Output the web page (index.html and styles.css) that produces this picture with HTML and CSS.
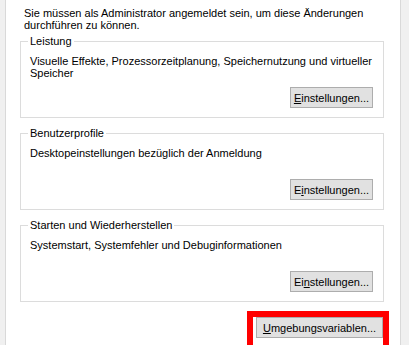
FILE: index.html
```html
<!DOCTYPE html>
<html lang="de">
<head>
    <meta charset="UTF-8">
    <meta name="viewport" content="width=device-width, initial-scale=1.0">
    <title>Systemeigenschaften - Erweitert</title>
    <link rel="stylesheet" href="styles.css">
</head>
<body>
    <div class="page">
        <p class="intro">
            Sie müssen als Administrator angemeldet sein, um diese Änderungen<br>
            durchführen zu können.
        </p>

        <fieldset class="group">
            <legend>Leistung</legend>
            <p class="desc">Visuelle Effekte, Prozessorzeitplanung, Speichernutzung und virtueller Speicher</p>
            <div class="actions">
                <button type="button"><u>E</u>instellungen...</button>
            </div>
        </fieldset>

        <fieldset class="group">
            <legend>Benutzerprofile</legend>
            <p class="desc">Desktopeinstellungen bezüglich der Anmeldung</p>
            <div class="actions">
                <button type="button">E<u>i</u>nstellungen...</button>
            </div>
        </fieldset>

        <fieldset class="group">
            <legend>Starten und Wiederherstellen</legend>
            <p class="desc">Systemstart, Systemfehler und Debuginformationen</p>
            <div class="actions">
                <button type="button">Ei<u>n</u>stellungen...</button>
            </div>
        </fieldset>

        <div class="footer">
            <span class="highlight">
                <button type="button" class="wide"><u>U</u>mgebungsvariablen...</button>
            </span>
        </div>
    </div>
</body>
</html>
```

FILE: styles.css
```css
body {
    margin: 0;
    background-color: #f0f0f0;
    font-family: "Liberation Sans", Arial, sans-serif;
    font-size: 11px;
    line-height: 12px;
    color: #000;
}

.page {
    margin-left: 5px;
    width: 394px;
    height: 345px;
    padding: 7px 16px 0 14px;
    box-sizing: border-box;
    width: 396px;
    background: white;
    border-left: 1px solid #d9d9d9;
    border-right: 1px solid #d9d9d9;
}

.intro {
    margin: 0 0 4px;
    padding-left: 4px;
}

.group {
    margin: 0 0 9px;
    padding: 8px 10px 9px 9px;
    border: 1px solid #dcdcdc;
}

.group legend {
    padding: 0 2px;
    margin-left: -2px;
}

.desc {
    margin: 0 0 8px;
    min-height: 24px;
}

.actions {
    display: flex;
    justify-content: flex-end;
}

button {
    font-family: inherit;
    font-size: 11px;
    color: #000;
    background-color: #e1e1e1;
    border: 1px solid #adadad;
    border-radius: 0;
    width: 83px;
    height: 21px;
    padding: 0;
}

button u {
    text-decoration-thickness: 1px;
}

.footer {
    display: flex;
    justify-content: flex-end;
    margin-top: 5px;
    margin-right: -5px;
}

.highlight {
    display: block;
    border: 6px solid #ff0000;
    border-bottom: none;
    padding: 0 0 8px 3px;
}

button.wide {
    width: 127px;
}
```
